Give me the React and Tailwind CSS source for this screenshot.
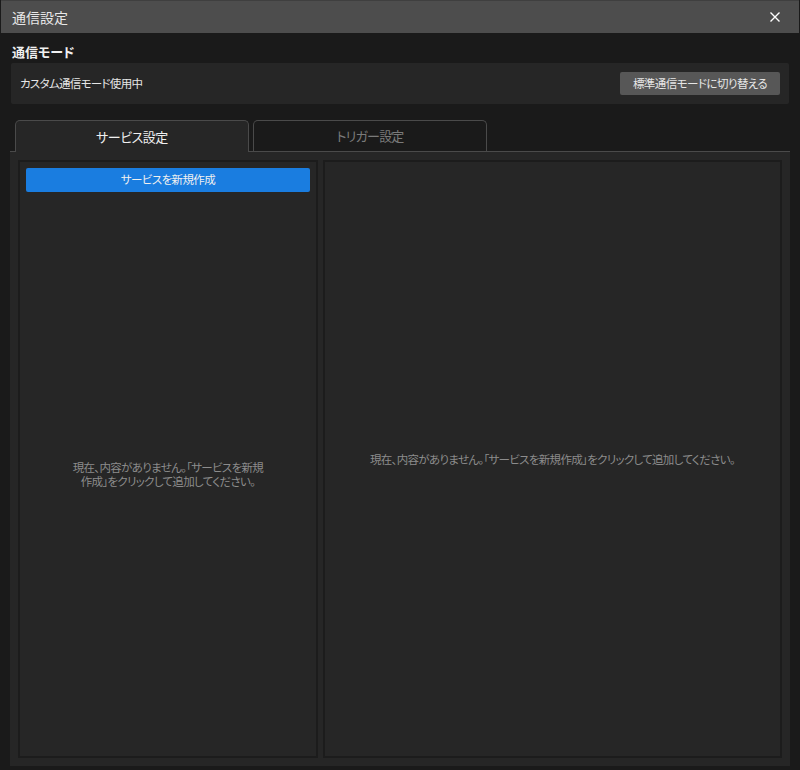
const font = "font-['Noto_Sans_CJK_JP','Liberation_Sans',sans-serif] [font-feature-settings:'palt']";

function EmptyNote({ className = "" }) {
  return (
    <p className={`text-center text-[11.5px] leading-[14px] tracking-[-0.68px] text-[#8c8c8c] ${className}`}>
      現在、内容がありません。「サービスを新規作成」をクリックして追加してください。
    </p>
  );
}

export default function App() {
  return (
    <div className={`${font} w-[800px] h-[770px] bg-[#1a1a1a] text-white overflow-hidden flex flex-col`}>
      <header className="h-[33px] mx-px shrink-0 bg-[#4d4d4d] border-t border-[#3f3f3f] flex items-center justify-between pl-[11px] pr-[19px]">
        <span className="text-[14px] text-[#e8e8e8]">通信設定</span>
        <svg width="10" height="10" viewBox="0 0 10 10" className="text-white">
          <path d="M0.5 0.5L9.5 9.5M9.5 0.5L0.5 9.5" stroke="currentColor" strokeWidth="1.4" fill="none" />
        </svg>
      </header>

      <div className="flex-1 flex flex-col pl-[10px] pr-[10px] pb-1">
        <h2 className="pl-[2px] mt-[9px] h-[21px] leading-[20px] text-[13px] font-bold text-[#f0f0f0]">通信モード</h2>

        <div className="mx-px h-[41px] rounded-[2px] bg-[#262626] flex items-center justify-between pl-[9px] pr-[9px]">
          <span className="text-[11.5px] tracking-[-0.7px] text-[#e6e6e6]">カスタム通信モード使用中</span>
          <button className="w-[160px] h-[23px] rounded-[2px] bg-[#575757] text-[11.5px] tracking-[-0.55px] text-[#e6e6e6]">
            標準通信モードに切り替える
          </button>
        </div>

        <div className="mt-4 pl-[5px] flex gap-1 h-[32px] shrink-0">
          <div className="w-[234px] h-[32px] rounded-t-[5px] border border-b-0 border-[#4a4a4a] bg-[#262626] flex items-center justify-center text-[13px] tracking-[-0.5px] text-[#f0f0f0] relative z-10">
            サービス設定
          </div>
          <div className="w-[234px] h-[31px] rounded-t-[5px] border border-b-0 border-[#4a4a4a] bg-[#1a1a1a] flex items-center justify-center text-[13px] tracking-[-0.8px] text-[#7a7a7a]">
            トリガー設定
          </div>
        </div>

        <div className="-mt-px flex-1 min-h-0 border-t border-[#4a4a4a] bg-[#262626] pl-2 pr-2 pt-2 pb-2 flex gap-[5px]">
          <section className="w-[300px] border-2 border-[#1c1c1c] flex flex-col px-[6px] pt-[6px]">
            <button className="h-6 w-full shrink-0 rounded-[2px] bg-[#1a7de0] text-[11.5px] tracking-[-0.6px] text-[#f0f0f0]">
              サービスを新規作成
            </button>
            <div className="flex-1 flex items-center justify-center px-[44px]">
              <EmptyNote />
            </div>
          </section>
          <section className="flex-1 border-2 border-[#1c1c1c] flex items-center justify-center">
            <EmptyNote className="whitespace-nowrap" />
          </section>
        </div>
      </div>
    </div>
  );
}
